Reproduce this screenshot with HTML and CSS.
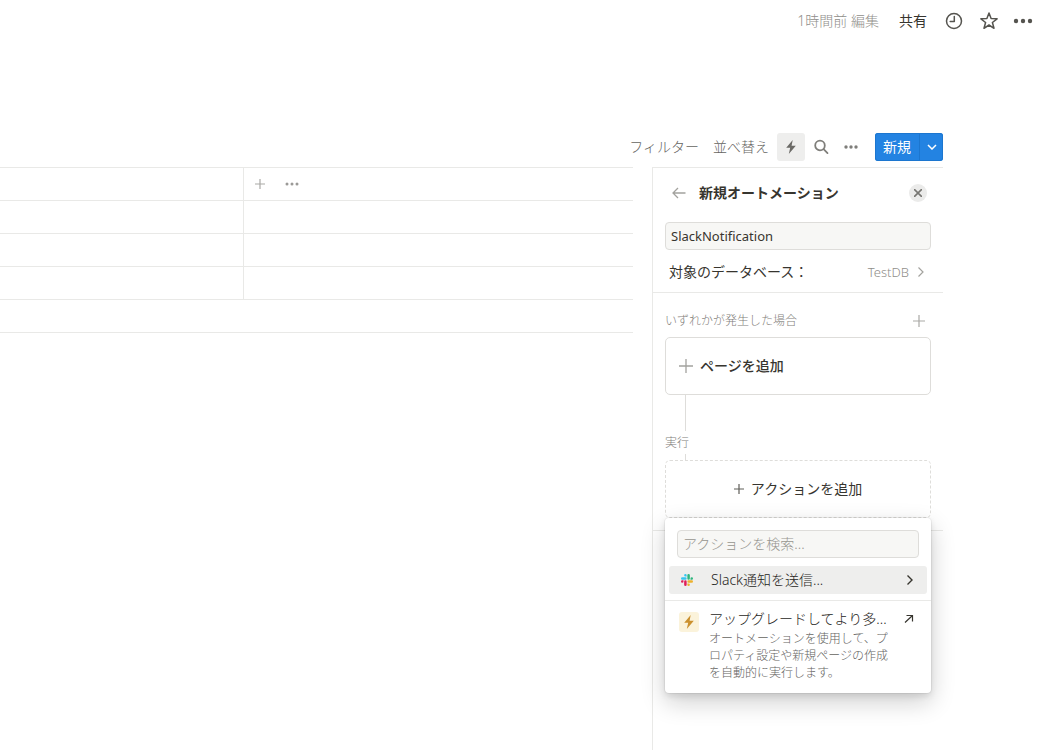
FILE: index.html
```html
<!DOCTYPE html>
<html lang="ja">
<head>
<meta charset="utf-8">
<meta name="viewport" content="width=device-width, initial-scale=1">
<title>新規オートメーション</title>
<link rel="stylesheet" href="styles.css">
</head>
<body>
<header class="topbar">
  <span class="edited">1時間前 編集</span>
  <button class="share" type="button">共有</button>
  <button class="icon-btn" type="button" aria-label="履歴">
    <svg width="18" height="18" viewBox="0 0 18 18" fill="none" stroke="#55544f" stroke-width="1.5" stroke-linecap="round" stroke-linejoin="round"><circle cx="9" cy="9" r="7.5"/><path d="M9.300 4.500v5H5.200"/></svg>
  </button>
  <button class="icon-btn" type="button" aria-label="お気に入り">
    <svg width="20" height="20" viewBox="0 0 20 20" fill="none" stroke="#55544f" stroke-width="1.5" stroke-linejoin="round"><path d="M10 2l2.100 5.600 6 .2-4.700 3.700 1.600 5.800-5-3.300-5 3.300 1.600-5.800L1.900 7.800l6-.2z"/></svg>
  </button>
  <button class="icon-btn" type="button" aria-label="その他">
    <svg width="20" height="6" viewBox="0 0 20 6" fill="#55544f"><circle cx="3" cy="3" r="2.200"/><circle cx="10" cy="3" r="2.200"/><circle cx="17" cy="3" r="2.200"/></svg>
  </button>
</header>

<main class="database">
  <div class="toolbar">
    <button class="tool-text" type="button">フィルター</button>
    <button class="tool-text" type="button">並べ替え</button>
    <div class="tool-icons">
      <button class="tool-icon active" type="button" aria-label="オートメーション">
        <svg width="14" height="16" viewBox="0 0 14 16" fill="#6b6a66"><path d="M8.700 1L2.200 8.700h4L4.800 15l7-8.200H7.600z"/></svg>
      </button>
      <button class="tool-icon" type="button" aria-label="検索">
        <svg width="16" height="16" viewBox="0 0 16 16" fill="none" stroke="#7f7e7a" stroke-width="1.800" stroke-linecap="round"><circle cx="7" cy="6.500" r="4.800"/><path d="M10.600 10.200l3.900 3.900"/></svg>
      </button>
      <button class="tool-icon" type="button" aria-label="その他">
        <svg width="16" height="4" viewBox="0 0 16 4" fill="#7f7e7a"><circle cx="3" cy="2" r="1.700"/><circle cx="8" cy="2" r="1.700"/><circle cx="13" cy="2" r="1.700"/></svg>
      </button>
    </div>
    <div class="new-group">
      <button class="new-btn" type="button">新規</button>
      <button class="new-more" type="button" aria-label="新規メニュー">
        <svg width="10" height="6" viewBox="0 0 10 6" fill="none" stroke="#fff" stroke-width="1.500"><path d="M1 1l4 4 4-4"/></svg>
      </button>
    </div>
  </div>

  <div class="content">
    <div class="table-wrap">
      <table class="grid">
        <thead>
          <tr><th class="first"></th><th>
            <div class="head-tools">
              <button class="icon-btn" type="button" aria-label="列を追加"><svg width="12" height="12" viewBox="0 0 12 12" stroke="#aaa9a6" stroke-width="1.200"><path d="M6 1v10M1 6h10"/></svg></button>
              <button class="icon-btn" type="button" aria-label="列の設定"><svg width="14" height="4" viewBox="0 0 14 4" fill="#9b9a97"><circle cx="2" cy="2" r="1.500"/><circle cx="7" cy="2" r="1.500"/><circle cx="12" cy="2" r="1.500"/></svg></button>
            </div>
          </th></tr>
        </thead>
        <tbody>
          <tr><td class="first"></td><td></td></tr>
          <tr><td class="first"></td><td></td></tr>
          <tr><td class="first"></td><td></td></tr>
          <tr><td colspan="2"></td></tr>
        </tbody>
      </table>
    </div>

    <aside class="panel">
      <div class="panel-top">
        <div class="panel-head">
          <button class="icon-btn" type="button" aria-label="戻る"><svg width="16" height="14" viewBox="0 0 16 14" fill="none" stroke="#a3a29e" stroke-width="1.300"><path d="M14.500 7H2M7 2L2 7l5 5"/></svg></button>
          <h2 class="panel-title">新規オートメーション</h2>
          <button class="close" type="button" aria-label="閉じる"><svg width="8" height="8" viewBox="0 0 8 8" stroke="#777672" stroke-width="1.600"><path d="M0 0l8 8M8 0L0 8"/></svg></button>
        </div>
        <input class="field" type="text" value="SlackNotification" aria-label="オートメーション名">
        <button class="target" type="button">
          <span>対象のデータベース：</span>
          <span class="target-value">TestDB <svg width="8" height="12" viewBox="0 0 8 12" fill="none" stroke="#a3a29e" stroke-width="1.200"><path d="M1.500 1.500L6 6l-4.500 4.500"/></svg></span>
        </button>
      </div>
      <div class="flow">
        <div class="flow-head">
          <span class="label">いずれかが発生した場合</span>
          <button class="icon-btn" type="button" aria-label="トリガーを追加"><svg width="12" height="12" viewBox="0 0 12 12" stroke="#aaa9a6" stroke-width="1.200"><path d="M6 0v12M0 6h12"/></svg></button>
        </div>
        <button class="card trigger" type="button">
          <svg width="14" height="14" viewBox="0 0 14 14" stroke="#a3a29e" stroke-width="1.300"><path d="M7 0v14M0 7h14"/></svg>
          ページを追加
        </button>
        <div class="connector"></div>
        <div class="label run">実行</div>
        <div class="connector short"></div>
        <div class="action">
          <button class="card dashed" type="button">
            <svg width="10" height="10" viewBox="0 0 10 10" stroke="#5f5e59" stroke-width="1.200"><path d="M5 0v10M0 5h10"/></svg>
            アクションを追加
          </button>
          <div class="menu">
            <div class="menu-search"><input class="field" type="text" placeholder="アクションを検索..." aria-label="アクションを検索"></div>
            <button class="menu-item" type="button">
              <svg width="12" height="12" viewBox="0 0 24 24">
                <path fill="#36c5f0" d="M8.800 0a2.500 2.500 0 0 0 0 5h2.500V2.500A2.500 2.500 0 0 0 8.800 0zM2.500 6.300a2.500 2.500 0 0 0 0 5h6.300a2.500 2.500 0 0 0 0-5z"/>
                <path fill="#2eb67d" d="M24 8.800a2.500 2.500 0 0 0-5 0v2.500h2.500A2.500 2.500 0 0 0 24 8.800zM17.700 2.500a2.500 2.500 0 0 0-5 0v6.300a2.500 2.500 0 0 0 5 0z"/>
                <path fill="#ecb22e" d="M15.200 24a2.500 2.500 0 0 0 0-5h-2.500v2.500a2.500 2.500 0 0 0 2.500 2.500zM21.500 17.700a2.500 2.500 0 0 0 0-5h-6.300a2.500 2.500 0 0 0 0 5z"/>
                <path fill="#e01e5a" d="M0 15.200a2.500 2.500 0 0 0 5 0v-2.500H2.500A2.500 2.500 0 0 0 0 15.200zM6.300 21.500a2.500 2.500 0 0 0 5 0v-6.300a2.500 2.500 0 0 0-5 0z"/>
              </svg>
              <span class="menu-text">Slack通知を送信...</span>
              <svg width="8" height="12" viewBox="0 0 8 12" fill="none" stroke="#37352f" stroke-width="1.400"><path d="M1.500 1.500L6 6l-4.500 4.500"/></svg>
            </button>
            <button class="upgrade" type="button">
              <span class="badge"><svg width="12" height="16" viewBox="0 0 12 16" fill="#cb912f"><path d="M7.700 1L1.200 8.700h4L3.800 15l7-8.200H6.600z"/></svg></span>
              <span class="upgrade-body">
                <span class="upgrade-title">アップグレードしてより多...</span>
                <span class="upgrade-desc">オートメーションを使用して、プロパティ設定や新規ページの作成を自動的に実行します。</span>
              </span>
              <svg class="out" width="10" height="10" viewBox="0 0 10 10" fill="none" stroke="#37352f" stroke-width="1.200"><path d="M1 8.500l7.500-7M2.500 1.500h6v6"/></svg>
            </button>
          </div>
        </div>
      </div>
    </aside>
  </div>
</main>
</body>
</html>
```

FILE: styles.css
```css
* { box-sizing: border-box; }

body {
  margin: 0;
  min-height: 100vh;
  display: flex;
  flex-direction: column;
  background: #fff;
  color: #37352f;
  font-family: "Noto Sans", "Noto Sans CJK JP", sans-serif;
  font-size: 14px;
  line-height: 20px;
}

button, input { font: inherit; color: inherit; }

button {
  display: flex;
  align-items: center;
  padding: 0;
  border: 0;
  background: none;
  text-align: left;
  cursor: pointer;
}

svg { display: block; flex: none; }

.topbar {
  display: flex;
  justify-content: flex-end;
  align-items: center;
  height: 41px;
  padding-right: 12px;
}
.edited { margin-right: 20px; color: #8f8e8a; font-weight: 300; }
.share { margin-right: 18px; }
.topbar .icon-btn + .icon-btn { margin-left: 16px; }
.topbar .icon-btn + .icon-btn:last-child { margin-left: 14px; }

.database {
  flex: 1;
  display: flex;
  flex-direction: column;
  padding: 92px 102px 0 0;
}

.toolbar {
  display: flex;
  justify-content: flex-end;
  align-items: center;
  height: 28px;
  margin-bottom: 6px;
}
.tool-text { margin-right: 14px; color: #65645f; font-weight: 300; }
.tool-text + .tool-text { margin-right: 8px; }
.tool-icons { display: flex; gap: 2px; margin-right: 10px; }
.tool-icon { justify-content: center; width: 28px; height: 28px; border-radius: 3px; }
.active { background: #eeeeed; }

.new-group {
  display: flex;
  height: 28px;
  border-radius: 3px;
  background: #2383e2;
  box-shadow: inset 0 0 0 1px #1c76cf;
  color: #fff;
}
.new-btn { padding: 0 8px; }
.new-more { justify-content: center; width: 24px; border-left: 1px solid #1c76cf; }

.content { flex: 1; display: flex; gap: 19px; }
.table-wrap { flex: 1; }

.grid {
  width: 100%;
  table-layout: fixed;
  border-collapse: separate;
  border-spacing: 0;
  border-top: 1px solid #e9e9e7;
}
.grid th, .grid td { height: 33px; padding: 0; border-bottom: 1px solid #e9e9e7; }
.grid .first { width: 244px; border-right: 1px solid #e9e9e7; }
.head-tools { display: flex; align-items: center; gap: 19px; padding-left: 10px; }

.panel {
  width: 291px;
  border-top: 1px solid #e9e9e7;
  border-left: 1px solid #e9e9e7;
}
.panel-top, .flow { padding: 0 12px; border-bottom: 1px solid #e9e9e7; }
.panel-head { display: flex; align-items: center; height: 50px; margin-bottom: 4px; padding: 0 4px 0 6px; }
.panel-title { flex: 1; margin: 0 0 0 12px; font-size: 14px; font-weight: 600; }
.close { justify-content: center; width: 18px; height: 18px; border-radius: 50%; background: #ebebea; }

.field {
  display: block;
  width: 100%;
  height: 28px;
  padding: 0 5px;
  border: 1px solid #deddda;
  border-radius: 4px;
  background: #f7f7f5;
  font-size: 13px;
  outline: none;
}
.field::placeholder { color: #96958f; opacity: 1; font-size: 14px; font-weight: 300; }

.target { justify-content: space-between; width: 100%; height: 36px; margin: 4px 0 2px; padding: 0 6px 0 4px; }
.target-value { display: flex; align-items: center; gap: 8px; color: #8f8e8a; font-size: 13px; font-weight: 300; }

.flow { padding-top: 11px; padding-bottom: 12px; }
.flow-head { display: flex; justify-content: space-between; align-items: center; height: 33px; padding-right: 6px; }
.label { color: #7f7e7a; font-size: 12px; font-weight: 300; }

.card {
  width: 100%;
  height: 58px;
  border: 1px solid #deddda;
  border-radius: 5px;
}
.trigger { gap: 7px; padding-left: 13px; font-weight: 500; }
.dashed { justify-content: center; gap: 7px; border-style: dashed; }
.connector { width: 1px; height: 36px; margin-left: 20px; background: #deddda; }
.short { height: 6px; }
.run { height: 23px; line-height: 24px; }

.action { position: relative; }
.menu {
  position: absolute;
  top: 100%;
  left: 0;
  right: 0;
  border-radius: 4px;
  background: #fff;
  box-shadow: 0 0 0 1px rgba(15, 15, 15, 0.05), 0 3px 6px rgba(15, 15, 15, 0.1), 0 9px 24px rgba(15, 15, 15, 0.2);
}
.menu-search { padding: 12px 12px 8px; }
.menu-item {
  width: calc(100% - 8px);
  height: 28px;
  margin: 0 4px 6px;
  padding: 0 13px 0 12px;
  border-radius: 3px;
  background: #eeeeed;
}
.menu-text { flex: 1; margin-left: 18px; color: #1f1e1b; font-weight: 300; }
.upgrade {
  align-items: flex-start;
  width: 100%;
  padding: 8px 17px 12px 14px;
  border-top: 1px solid #e9e9e7;
}
.badge {
  display: flex;
  justify-content: center;
  align-items: center;
  width: 20px;
  height: 20px;
  margin-top: 3px;
  border-radius: 3px;
  background: #fbf3db;
}
.upgrade-body { flex: 1; min-width: 0; margin: 0 15px 0 10px; }
.upgrade-title { display: block; white-space: nowrap; color: #1f1e1b; font-weight: 300; }
.upgrade-desc { display: block; margin-top: 1px; color: #65645f; font-size: 12px; font-weight: 300; line-height: 17px; }
.out { margin-top: 5px; }
```
